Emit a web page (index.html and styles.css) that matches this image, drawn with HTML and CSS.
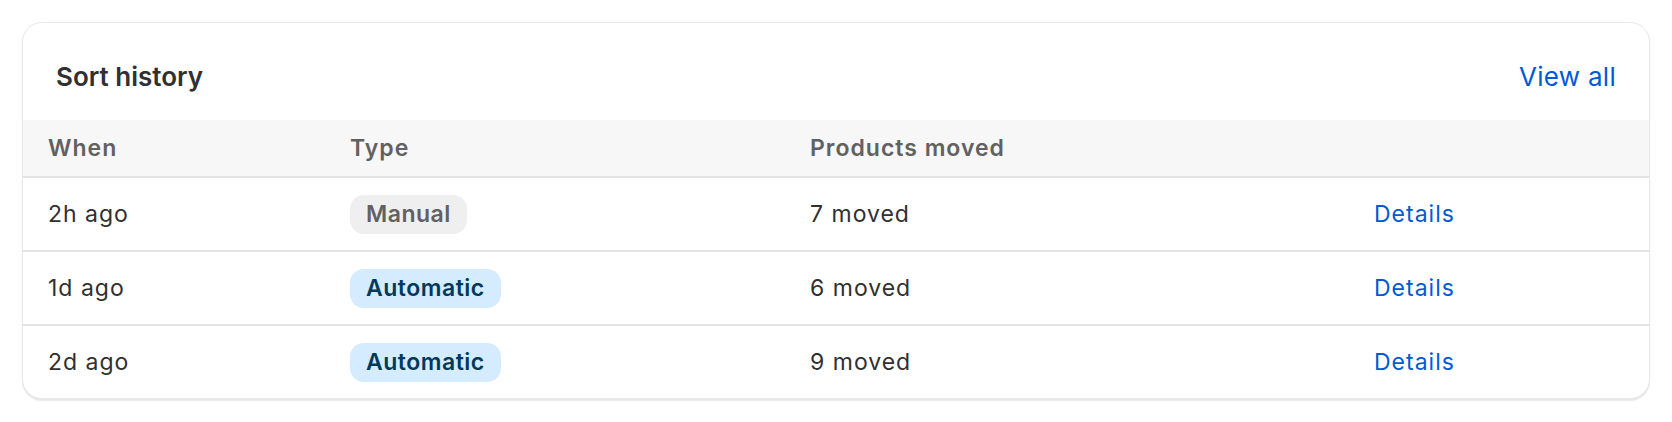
FILE: index.html
```html
<!DOCTYPE html>
<html lang="en">
<head>
<meta charset="utf-8">
<title>Sort history</title>
<link rel="stylesheet" href="styles.css">
</head>
<body>
<section class="card">
  <header class="card-head">
    <h2 class="card-title">Sort history</h2>
    <a class="link view-all" href="#">View all</a>
  </header>
  <div class="table">
    <div class="row row-head">
      <div class="cell">When</div>
      <div class="cell">Type</div>
      <div class="cell">Products moved</div>
      <div class="cell"></div>
    </div>
    <div class="row">
      <div class="cell">2h ago</div>
      <div class="cell"><span class="badge badge-manual">Manual</span></div>
      <div class="cell">7 moved</div>
      <div class="cell"><a class="link" href="#">Details</a></div>
    </div>
    <div class="row">
      <div class="cell">1d ago</div>
      <div class="cell"><span class="badge badge-auto">Automatic</span></div>
      <div class="cell">6 moved</div>
      <div class="cell"><a class="link" href="#">Details</a></div>
    </div>
    <div class="row row-last">
      <div class="cell">2d ago</div>
      <div class="cell"><span class="badge badge-auto">Automatic</span></div>
      <div class="cell">9 moved</div>
      <div class="cell"><a class="link" href="#">Details</a></div>
    </div>
  </div>
</section>
</body>
</html>
```

FILE: styles.css
```css
* { box-sizing: border-box; }

html, body {
  margin: 0;
  background: #ffffff;
}

body {
  padding: 22px;
  font-family: Inter, "Noto Sans", "Liberation Sans", sans-serif;
  color: #303030;
}

.card {
  background: #ffffff;
  border: 1px solid #e9e9e9;
  border-radius: 20px;
  box-shadow: 0 2px 1px rgba(0, 0, 0, 0.07), 0 1px 3px rgba(0, 0, 0, 0.04);
  overflow: hidden;
}

.card-head {
  display: flex;
  align-items: center;
  justify-content: space-between;
  padding: 38px 33px 27px 33px;
}

.card-title {
  margin: 0;
  font-size: 26px;
  line-height: 32px;
  font-weight: 600;
  letter-spacing: 0;
  color: #303030;
}

.link {
  color: #005bd3;
  text-decoration: none;
}

.view-all {
  font-size: 26px;
  line-height: 32px;
  font-weight: 400;
  letter-spacing: 0.3px;
}

.row {
  display: grid;
  grid-template-columns: 302px 460px 564px 1fr;
  align-items: center;
  height: 74px;
  border-bottom: 2px solid #e3e3e3;
  font-size: 23px;
  line-height: 28px;
  letter-spacing: 1px;
}

.row-head {
  height: 58px;
  background: #f7f7f7;
  color: #616161;
  font-weight: 600;
}

.row-last {
  height: 72px;
  border-bottom: none;
}

.cell {
  padding-left: 25px;
}

.badge {
  display: inline-block;
  height: 39px;
  line-height: 39px;
  padding: 0 16px;
  border-radius: 14px;
  font-weight: 600;
  letter-spacing: 0.5px;
}

.badge-manual {
  background: #efefef;
  color: #616161;
}

.badge-auto {
  background: #d5ebff;
  color: #003a5a;
}
```
